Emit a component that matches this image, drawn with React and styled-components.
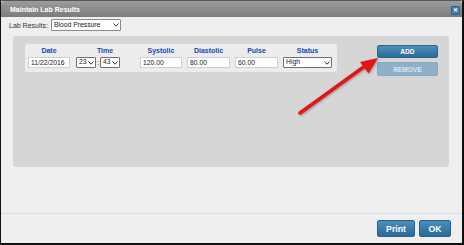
import React from 'react'
import styled, { createGlobalStyle } from 'styled-components'

const GlobalStyle = createGlobalStyle`
  html, body {
    margin: 0;
    padding: 0;
    background: #fff;
  }
  * {
    box-sizing: border-box;
  }
`

const Window = styled.div`
  position: relative;
  width: 464px;
  height: 245px;
  display: flex;
  flex-direction: column;
  background: #efefef;
  border-left: 1px solid #111;
  border-top: 1px solid #555;
  border-right: 2px solid #111;
  border-bottom: 2px solid #111;
  font-family: 'Liberation Sans', Arial, sans-serif;
`

const TitleBar = styled.div`
  height: 16px;
  display: flex;
  align-items: center;
  justify-content: space-between;
  padding: 0 2px 0 9px;
  background: linear-gradient(#9d9d9d, #7b7b7b);
  border-top-left-radius: 3px;
  border-top-right-radius: 3px;
`

const Title = styled.span`
  color: #fff;
  font-size: 7px;
  font-weight: bold;
`

const CloseBtn = styled.div`
  width: 9px;
  height: 9px;
  margin-top: 2px;
  display: flex;
  align-items: center;
  justify-content: center;
  background: #3d7fb2;
  border: 1px solid #2b6390;
  border-radius: 1px;
  color: #fff;
  font-size: 6px;
  font-weight: bold;
  line-height: 1;
`

const Content = styled.div`
  flex: 1;
  padding: 2px 13px 0 12px;
`

const Toolbar = styled.div`
  display: flex;
  align-items: center;
  gap: 3px;
  height: 12px;
`

const Label = styled.span`
  font-size: 7px;
  color: #333;
  margin-left: -4px;
`

const SelectWrap = styled.div`
  position: relative;
  width: ${p => p.$w}px;
  height: ${p => p.$h || 11}px;
`

const Select = styled.select`
  appearance: none;
  display: block;
  width: 100%;
  height: 100%;
  margin: 0;
  padding: 0 0 0 2px;
  font-family: 'Liberation Sans', Arial, sans-serif;
  font-size: 6.8px;
  line-height: 1;
  color: #222;
  background: #fff;
  border: 1px solid ${p => (p.$dark ? '#6f6f6f' : '#8a8a8a')};
  border-radius: 1px;
  outline: none;
`

const Chevron = styled.svg`
  position: absolute;
  right: 2px;
  top: 50%;
  margin-top: -2px;
  width: 6px;
  height: 4px;
  pointer-events: none;
`

const Panel = styled.div`
  margin-top: 5px;
  height: 131px;
  display: flex;
  justify-content: space-between;
  align-items: flex-start;
  padding: 8px 11px 0 12px;
  background: #d6d6d6;
  border-radius: 3px;
`

const RowBox = styled.div`
  width: 312px;
  padding: 3px 5px 4px 3px;
  background: #ececec;
  border-radius: 3px;
  display: grid;
  grid-template-columns: 42px 60px 42px 43px 43px 49px;
  column-gap: 5px;
  align-items: center;
`

const Head = styled.div`
  height: 10px;
  font-size: 7px;
  font-weight: bold;
  color: #2146b6;
  text-align: center;
  line-height: 8px;
`

const Input = styled.input`
  display: block;
  width: 100%;
  height: 11px;
  margin: 0;
  padding: 0 2px;
  font-family: 'Liberation Sans', Arial, sans-serif;
  font-size: 6.8px;
  color: #222;
  background: #fff;
  border: 1px solid #cfcfcf;
  outline: none;
`

const TimeCell = styled.div`
  display: flex;
  align-items: center;
  gap: 1px;
  margin-left: 1px;
`

const Colon = styled.span`
  font-size: 7px;
  color: #333;
`

const BtnCol = styled.div`
  margin-top: 1px;
  display: flex;
  flex-direction: column;
  gap: 4px;
`

const SmallBtn = styled.button`
  width: 61px;
  height: ${p => p.$h}px;
  padding: 0;
  font-family: 'Liberation Sans', Arial, sans-serif;
  font-size: 6.6px;
  font-weight: bold;
  color: ${p => (p.$off ? '#dce6ee' : '#fff')};
  background: ${p => (p.$off ? '#8fb0c8' : 'linear-gradient(#4d8ebc, #2d6c98)')};
  border: 1px solid ${p => (p.$off ? '#86a8c0' : '#2a6590')};
  border-radius: 2px;
`

const Footer = styled.div`
  display: flex;
  justify-content: flex-end;
  gap: 4px;
  padding: 6px 11px 6px 0;
  border-top: 1px solid #dcdcdc;
`

const BigBtn = styled.button`
  width: ${p => p.$w}px;
  height: 17px;
  padding: 0;
  font-family: 'Liberation Sans', Arial, sans-serif;
  font-size: 8.7px;
  font-weight: bold;
  color: #fff;
  background: linear-gradient(#4a8cba, #2b6a96);
  border: 1px solid #275f88;
  border-radius: 2px;
`

const Arrow = styled.svg`
  position: absolute;
  left: 0;
  top: 0;
  pointer-events: none;
  filter: drop-shadow(1px 1px 1px rgba(0, 0, 0, 0.3));
`

function Dropdown({ w, h, value, options, dark }) {
  return (
    <SelectWrap $w={w} $h={h}>
      <Select defaultValue={value} $dark={dark}>
        {options.map(o => <option key={o}>{o}</option>)}
      </Select>
      <Chevron viewBox="0 0 6 4">
        <polyline points="0.5,0.5 3,3.2 5.5,0.5" fill="none" stroke="#333" strokeWidth="1" />
      </Chevron>
    </SelectWrap>
  )
}

export default function App() {
  return (
    <>
      <GlobalStyle />
      <Window>
        <TitleBar>
          <Title>Maintain Lab Results</Title>
          <CloseBtn>✕</CloseBtn>
        </TitleBar>
        <Content>
          <Toolbar>
            <Label>Lab Results:</Label>
            <Dropdown w={70} h={12} value="Blood Pressure" options={['Blood Pressure']} />
          </Toolbar>
          <Panel>
            <RowBox>
              <Head>Date</Head>
              <Head>Time</Head>
              <Head>Systolic</Head>
              <Head>Diastolic</Head>
              <Head>Pulse</Head>
              <Head>Status</Head>
              <Input defaultValue="11/22/2016" />
              <TimeCell>
                <Dropdown w={20} value="23" options={['23']} dark />
                <Colon>:</Colon>
                <Dropdown w={20} value="43" options={['43']} dark />
              </TimeCell>
              <Input defaultValue="120.00" />
              <Input defaultValue="80.00" />
              <Input defaultValue="60.00" />
              <Dropdown w={49} value="High" options={['High', 'Normal', 'Low']} dark />
            </RowBox>
            <BtnCol>
              <SmallBtn $h={13}>ADD</SmallBtn>
              <SmallBtn $h={14} $off>REMOVE</SmallBtn>
            </BtnCol>
          </Panel>
        </Content>
        <Footer>
          <BigBtn $w={38}>Print</BigBtn>
          <BigBtn $w={32}>OK</BigBtn>
        </Footer>
        <Arrow width="464" height="245" viewBox="0 0 464 245">
          <line x1="299" y1="112" x2="364" y2="65" stroke="#e5141b" strokeWidth="3.5" strokeLinecap="round" />
          <polygon points="377,57 367.5,72.5 359,61" fill="#e5141b" />
        </Arrow>
      </Window>
    </>
  )
}
